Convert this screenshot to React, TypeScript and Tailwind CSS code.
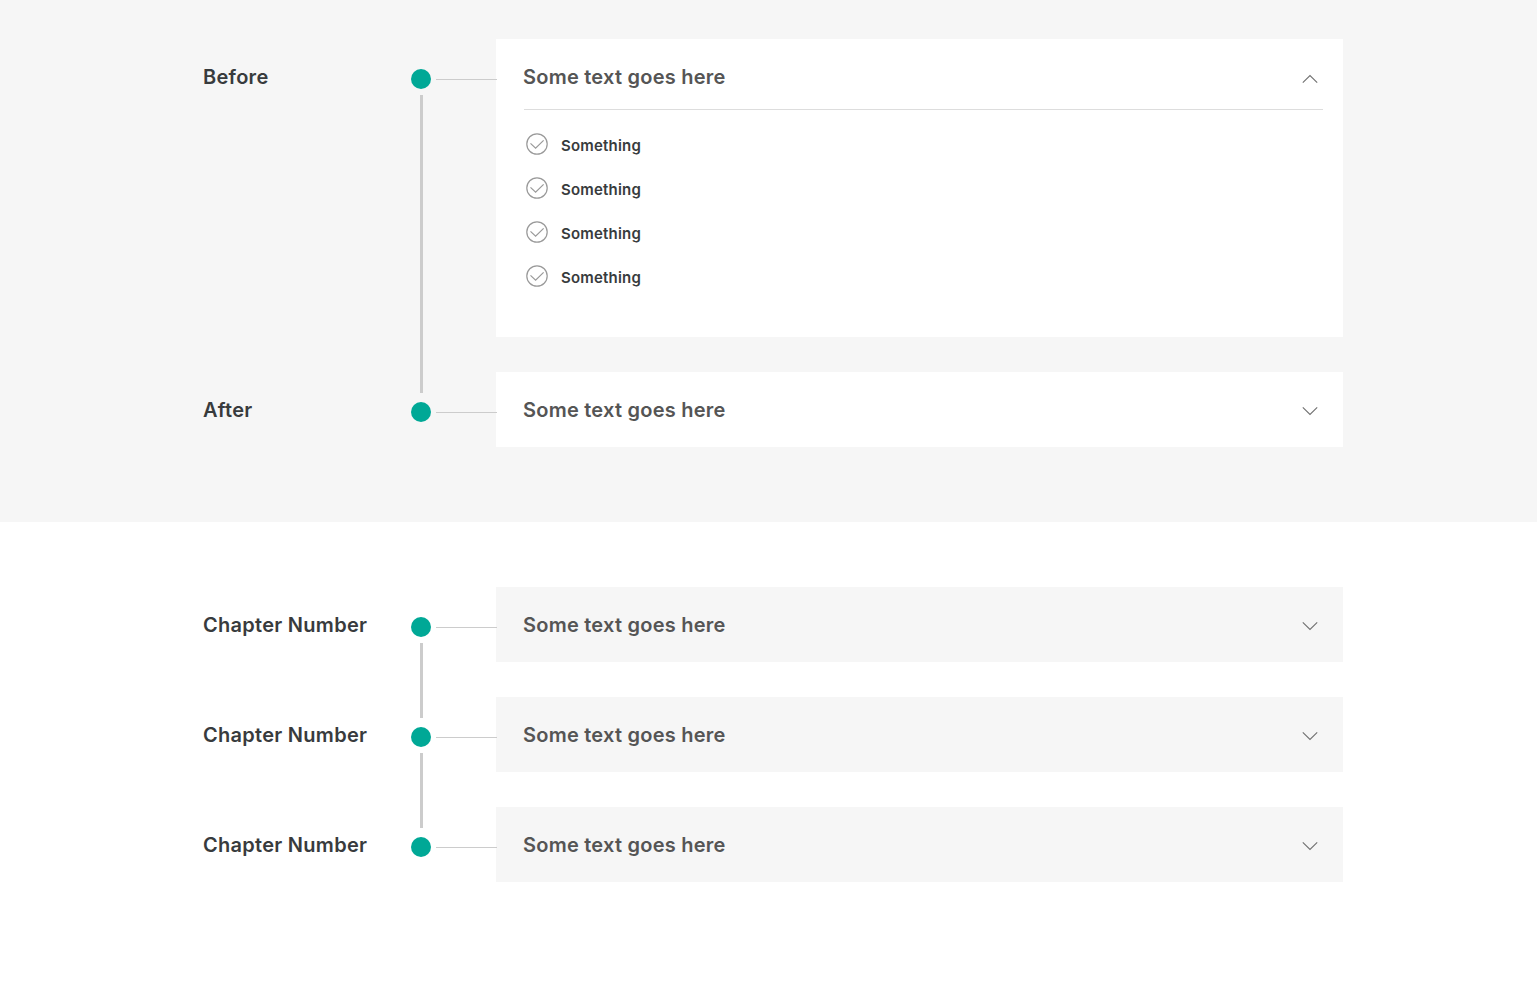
import React from "react";

function Chevron({ open }: { open?: boolean }) {
  return (
    <svg width="16" height="10" viewBox="0 0 16 10" fill="none" stroke="#707070" strokeWidth="1.1">
      <path d={open ? "M.8 8.7 8 1.6 15.2 8.7" : "M.8 1.3 8 8.4 15.2 1.3"} />
    </svg>
  );
}

function Check() {
  return (
    <svg className="shrink-0" width="24" height="24" viewBox="0 0 24 24" fill="none" stroke="#999" strokeWidth="1.2">
      <circle cx="12" cy="12" r="10.2" />
      <path d="M5.5 11.4 10.6 16.1 18.6 8.4" />
    </svg>
  );
}

type RowProps = {
  label: string;
  shaded?: boolean;
  items?: string[];
  last?: boolean;
};

function Row({ label, shaded, items, last }: RowProps) {
  return (
    <div className="flex">
      <h2 className="w-[208px] pt-[25px] text-[20px] leading-[26px] font-semibold tracking-[0.28px] whitespace-nowrap text-[#383b3d]">{label}</h2>
      <div className="flex w-5 flex-col items-center pt-[30px]">
        <div className="size-5 shrink-0 rounded-full bg-[#00a896]" />
        {!last && <div className="mt-1.5 -mb-[21px] ml-px w-[3px] grow bg-[#ccc]" />}
      </div>
      <div className="z-10 mt-10 -mr-px ml-[5px] h-px w-[61px] bg-[#ccc]" />
      <div className={`mb-[35px] w-[847px] ${shaded ? "bg-[#f6f6f6]" : "bg-white"} ${items ? "h-[298px]" : "h-[75px]"}`}>
        <div className={`mr-5 ml-7 flex justify-between ${items ? "h-[71px] border-b border-[#ddd]" : "h-[75px]"}`}>
          <h3 className="-ml-px pt-[25px] text-[20px] leading-[26px] font-semibold tracking-[0.24px] whitespace-nowrap text-[#555]">Some text goes here</h3>
          <div className={`mr-[5px] ${items ? "mt-[35px]" : "mt-[34px]"}`}>
            <Chevron open={!!items} />
          </div>
        </div>
        {items && (
          <ul className="mt-[22px] ml-[29px] flex flex-col gap-5">
            {items.map((item, i) => (
              <li key={i} className="flex h-6 gap-3">
                <Check />
                <span className="pt-1 text-[15px] leading-5 font-semibold tracking-[0.2px] text-[#383b3d]">{item}</span>
              </li>
            ))}
          </ul>
        )}
      </div>
    </div>
  );
}

export default function App() {
  return (
    <main className="min-h-[982px] bg-white font-['Inter','Liberation_Sans',sans-serif]">
      <section className="h-[522px] bg-[#f6f6f6] pt-[39px] pl-[203px]">
        <Row label="Before" items={["Something", "Something", "Something", "Something"]} />
        <Row label="After" last />
      </section>
      <section className="pt-[65px] pl-[203px]">
        <Row label="Chapter Number" shaded />
        <Row label="Chapter Number" shaded />
        <Row label="Chapter Number" shaded last />
      </section>
    </main>
  );
}
